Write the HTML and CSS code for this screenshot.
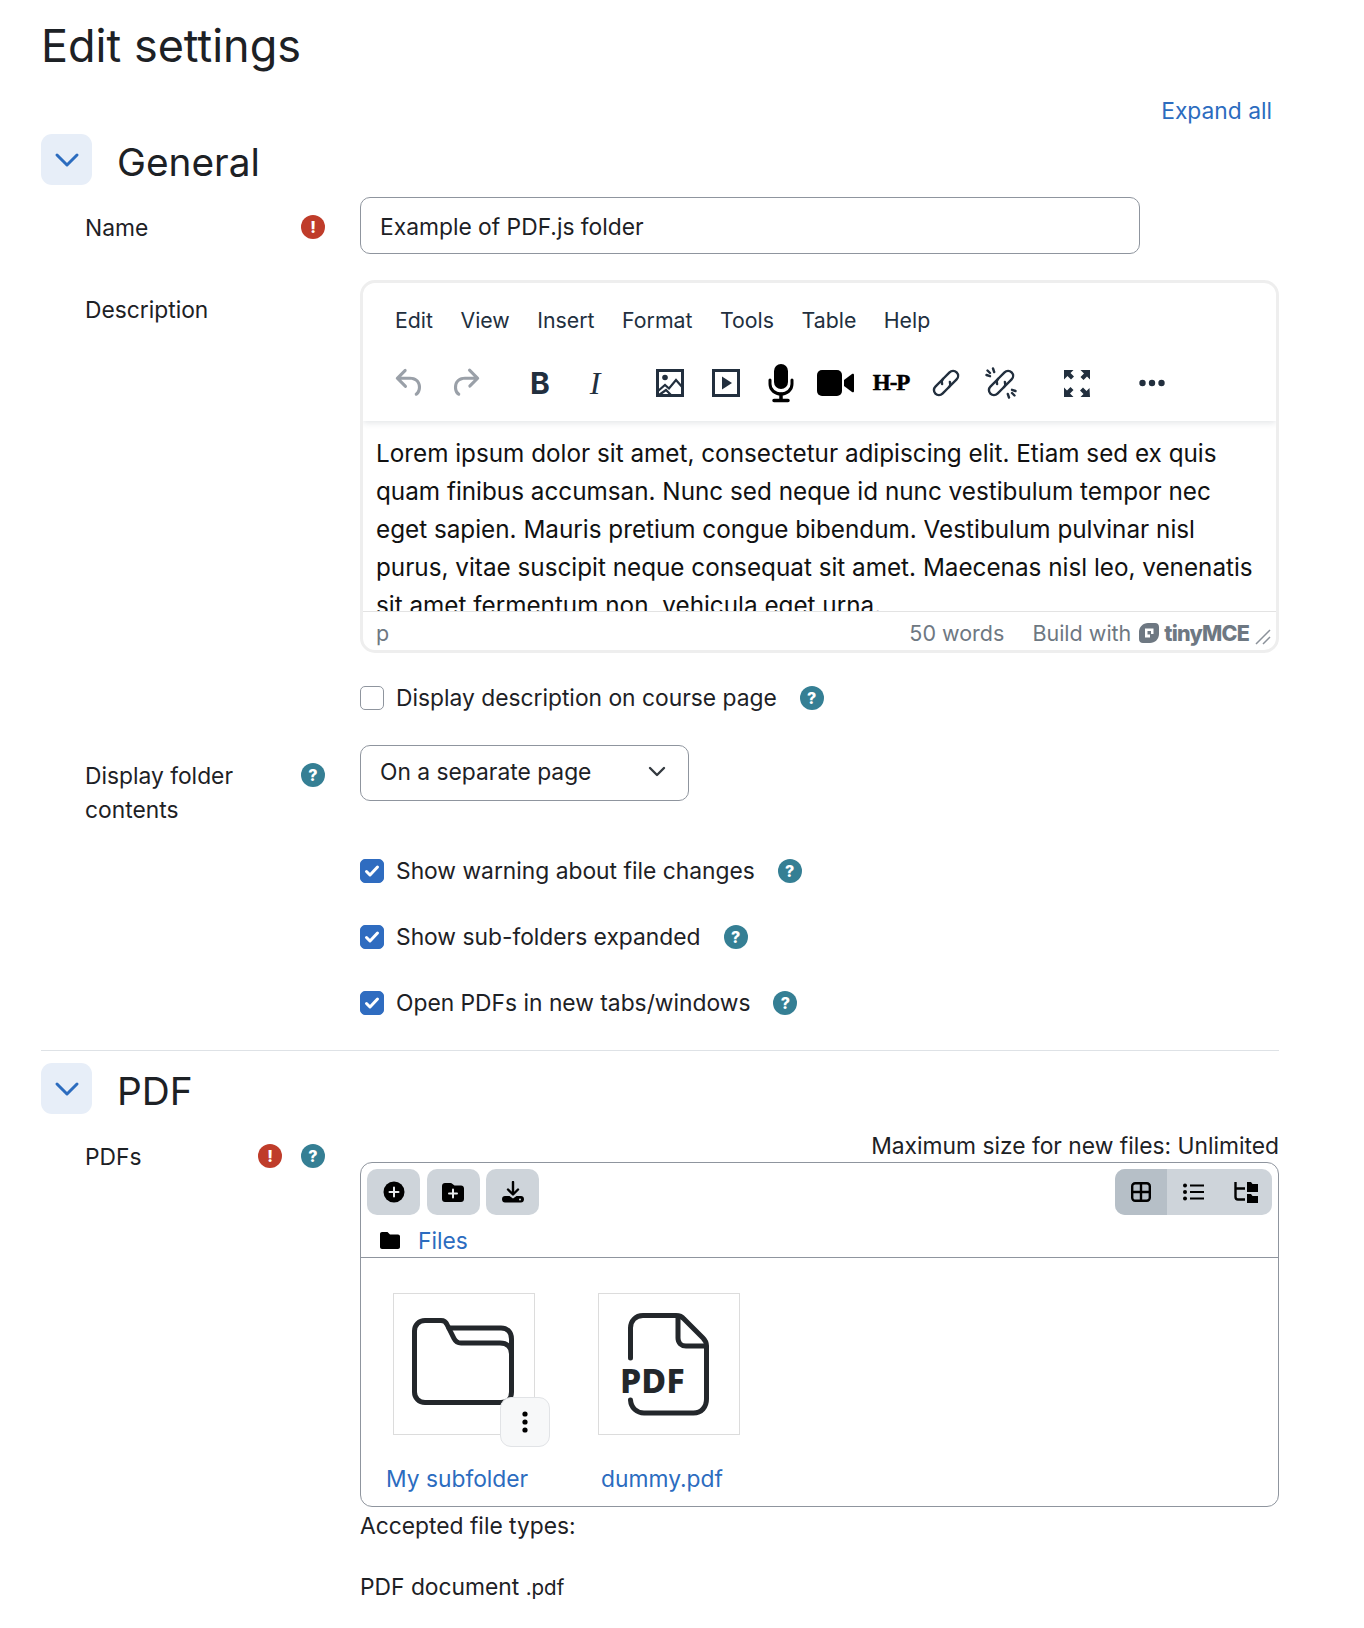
FILE: index.html
```html
<!DOCTYPE html>
<html>
<head>
  <title>Edit settings</title>
  <link rel="stylesheet" href="styles.css">
</head>
<body>
  <h1>Edit settings</h1>
  <div class="expand-row"><a href="#">Expand all</a></div>

  <div class="fold-head">
    <button class="toggle"><svg width="26" height="26" viewBox="0 0 26 26"><path d="M3 8l10 10L23 8" fill="none" stroke="#2c6cbf" stroke-width="3" stroke-linecap="round" stroke-linejoin="round"/></svg></button>
    <h2>General</h2>
  </div>

  <div class="row row-name">
    <div class="label-col">
      <span class="label-text">Name</span>
      <span class="badge badge-error">!</span>
    </div>
    <div class="field-col">
      <input class="text-input" type="text" value="Example of PDF.js folder">
    </div>
  </div>

  <div class="row row-desc">
    <div class="label-col">
      <span class="label-text">Description</span>
    </div>
    <div class="field-col">
      <div class="editor">
        <div class="editor-head">
          <div class="menubar">
            <span>Edit</span><span>View</span><span>Insert</span><span>Format</span><span>Tools</span><span>Table</span><span>Help</span>
          </div>
          <div class="toolbar">
            <div class="tool-group">
              <span class="tool"><svg width="38" height="38" viewBox="0 0 24 24"><path fill="#9aa0a8" d="M6.4 8H12c3.7 0 6.2 2 6.8 5.1.6 2.7-.4 5.6-2.3 6.8a1 1 0 0 1-1-1.8c1.1-.7 1.8-2.7 1.4-4.6-.5-2.1-2.1-3.5-4.9-3.500H6.4l3.300 3.300a1 1 0 1 1-1.400 1.400l-5-5a1 1 0 0 1 0-1.400l5-5a1 1 0 0 1 1.400 1.400L6.400 8Z"/></svg></span>
              <span class="tool"><svg width="38" height="38" viewBox="0 0 24 24"><path fill="#9aa0a8" d="M17.6 10H12c-2.800 0-4.400 1.400-4.900 3.500-.4 2 .3 3.900 1.400 4.600a1 1 0 1 1-1 1.800c-2-1.200-2.900-4.100-2.300-6.800.6-3 3-5.100 6.800-5.100h5.600l-3.300-3.300a1 1 0 1 1 1.400-1.400l5 5a1 1 0 0 1 0 1.400l-5 5a1 1 0 0 1-1.400-1.400l3.300-3.300Z"/></svg></span>
            </div>
            <div class="tool-group">
              <span class="tool tool-b">B</span>
              <span class="tool tool-i">I</span>
            </div>
            <div class="tool-group">
              <span class="tool"><svg width="32" height="32" viewBox="0 0 32 32"><rect x="3.500" y="3.500" width="25" height="25" fill="none" stroke="#222f3e" stroke-width="3"/><circle cx="11" cy="10.500" r="2.800" fill="#222f3e"/><path d="M4 24l7-6 4 3.500L22 13l7 8M5 28l7-5 5 5" fill="none" stroke="#222f3e" stroke-width="2.200"/></svg></span>
              <span class="tool"><svg width="32" height="32" viewBox="0 0 32 32"><rect x="3.500" y="3.500" width="25" height="25" fill="none" stroke="#222f3e" stroke-width="3"/><path d="M12 9.500l10 6.500-10 6.500z" fill="#222f3e"/></svg></span>
              <span class="tool"><svg width="30" height="40" viewBox="0 0 30 40"><rect x="8" y="1" width="14" height="25" rx="7" fill="#000"/><path d="M4 17v4c0 6 5 10 11 10s11-4 11-10v-4" fill="none" stroke="#000" stroke-width="3" stroke-linecap="round"/><path d="M15 31v5M8 37.500h14" fill="none" stroke="#000" stroke-width="3.500" stroke-linecap="round"/></svg></span>
              <span class="tool"><svg width="38" height="28" viewBox="0 0 38 28"><rect x="0" y="1" width="25" height="26" rx="5" fill="#000"/><path d="M27 11l8-6c1-.7 2-.2 2 1v16c0 1.200-1 1.700-2 1l-8-6z" fill="#000"/></svg></span>
              <span class="tool tool-h5p">H-P</span>
              <span class="tool"><svg width="32" height="32" viewBox="0 0 32 32"><g transform="rotate(-45 16 16)" fill="none" stroke="#222f3e" stroke-width="2.400" stroke-linecap="round"><path d="M17 11H6a5 5 0 0 0 0 10h9a5 5 0 0 0 4.500-3"/><path d="M15 21h11a5 5 0 0 0 0-10h-9a5 5 0 0 0-4.500 3"/></g></svg></span>
              <span class="tool"><svg width="32" height="32" viewBox="0 0 32 32"><g fill="none" stroke="#222f3e" stroke-width="2.400" stroke-linecap="round"><g transform="rotate(-45 16 16)"><path d="M17 11H6a5 5 0 0 0 0 10h9a5 5 0 0 0 4.500-3"/><path d="M15 21h11a5 5 0 0 0 0-10h-9a5 5 0 0 0-4.500 3"/></g><path d="M8 1.500l1.200 3.500M1.500 8l3.500 1.200M2.500 3.500L5 6M24 30.500l-1.200-3.500M30.500 24L27 22.800M29.500 28.500L27 26"/></g></svg></span>
            </div>
            <div class="tool-group">
              <span class="tool"><svg width="26" height="27" viewBox="0 0 26 27"><g fill="#222f3e"><path d="M0 0h9.500L6.500 3l3.500 3.500-3 3L3.500 6 0 9.500zM26 0v9.500L23 6.500 19.500 10l-3-3L20 3.500 16.500 0zM0 27v-9.500l3 3 3.500-3.500 3 3L6 23.500 9.500 27zM26 27h-9.500l3-3-3.500-3.500 3-3 3.500 3.500 3-3z"/></g></svg></span>
            </div>
            <div class="tool-group">
              <span class="tool"><svg width="26" height="8" viewBox="0 0 26 8"><g fill="#222f3e"><circle cx="3.500" cy="4" r="3.200"/><circle cx="13" cy="4" r="3.200"/><circle cx="22.500" cy="4" r="3.200"/></g></svg></span>
            </div>
          </div>
        </div>
        <div class="editor-body">Lorem ipsum dolor sit amet, consectetur adipiscing elit. Etiam sed ex quis quam finibus accumsan. Nunc sed neque id nunc vestibulum tempor nec eget sapien. Mauris pretium congue bibendum. Vestibulum pulvinar nisl purus, vitae suscipit neque consequat sit amet. Maecenas nisl leo, venenatis sit amet fermentum non, vehicula eget urna.</div>
        <div class="statusbar">
          <span class="path">p</span>
          <span class="words">50 words</span>
          <span class="brand">Build with
            <svg class="brand-logo" width="22" height="22" viewBox="0 0 22 22"><path fill-rule="evenodd" fill="#6e7882" d="M10 1h7c2.500 0 4 1.500 4 4v7c0 5-4 9-9 9H5c-2.500 0-4-1.500-4-4v-7C1 5 5 1 10 1zM7 6.500v9h5v-3.500h3.500V6.500z"/><rect x="9.500" y="9" width="3.500" height="3.500" fill="#6e7882"/></svg>
            <b>tinyMCE</b>
          </span>
          <svg class="grip" width="16" height="16" viewBox="0 0 16 16"><path d="M1 15L15 1M8 15l7-7" stroke="#8b929a" stroke-width="1.500" fill="none"/></svg>
        </div>
      </div>
    </div>
  </div>

  <div class="row row-check row-first-check">
    <div class="label-col"></div>
    <div class="field-col check-line">
      <span class="checkbox"></span>
      <span>Display description on course page</span>
      <span class="badge badge-help">?</span>
    </div>
  </div>

  <div class="row row-select">
    <div class="label-col">
      <span class="label-text">Display folder<br>contents</span>
      <span class="badge badge-help">?</span>
    </div>
    <div class="field-col">
      <div class="select-box">
        <span>On a separate page</span>
        <svg width="18" height="12" viewBox="0 0 18 12"><path d="M2 2l7 7 7-7" fill="none" stroke="#343a40" stroke-width="2.400" stroke-linecap="round" stroke-linejoin="round"/></svg>
      </div>
    </div>
  </div>

  <div class="row row-check">
    <div class="label-col"></div>
    <div class="field-col check-line">
      <span class="checkbox is-checked"><svg width="16" height="14" viewBox="0 0 16 14"><path d="M2.500 7.500l3.500 3.500 7.500-8" fill="none" stroke="#fff" stroke-width="3" stroke-linecap="round" stroke-linejoin="round"/></svg></span>
      <span>Show warning about file changes</span>
      <span class="badge badge-help">?</span>
    </div>
  </div>
  <div class="row row-check">
    <div class="label-col"></div>
    <div class="field-col check-line">
      <span class="checkbox is-checked"><svg width="16" height="14" viewBox="0 0 16 14"><path d="M2.500 7.500l3.500 3.500 7.500-8" fill="none" stroke="#fff" stroke-width="3" stroke-linecap="round" stroke-linejoin="round"/></svg></span>
      <span>Show sub-folders expanded</span>
      <span class="badge badge-help">?</span>
    </div>
  </div>
  <div class="row row-check">
    <div class="label-col"></div>
    <div class="field-col check-line">
      <span class="checkbox is-checked"><svg width="16" height="14" viewBox="0 0 16 14"><path d="M2.500 7.500l3.500 3.500 7.500-8" fill="none" stroke="#fff" stroke-width="3" stroke-linecap="round" stroke-linejoin="round"/></svg></span>
      <span>Open PDFs in new tabs/windows</span>
      <span class="badge badge-help">?</span>
    </div>
  </div>

  <hr class="divider">

  <div class="fold-head fold-pdf">
    <button class="toggle"><svg width="26" height="26" viewBox="0 0 26 26"><path d="M3 8l10 10L23 8" fill="none" stroke="#2c6cbf" stroke-width="3" stroke-linecap="round" stroke-linejoin="round"/></svg></button>
    <h2>PDF</h2>
  </div>

  <div class="row row-pdfs">
    <div class="label-col">
      <span class="label-text">PDFs</span>
      <span class="badge badge-error">!</span>
      <span class="badge badge-help">?</span>
    </div>
    <div class="field-col">
      <div class="max-size">Maximum size for new files: Unlimited</div>
      <div class="filemanager">
        <div class="fm-top">
          <div class="fm-actions">
            <span class="fm-btn"><svg width="22" height="22" viewBox="0 0 22 22"><circle cx="11" cy="11" r="10.500" fill="#000"/><path d="M11 6.500v9M6.500 11h9" stroke="#e6e9ec" stroke-width="2" stroke-linecap="round"/></svg></span>
            <span class="fm-btn"><svg width="22" height="20" viewBox="0 0 22 20"><path d="M3 1h5.500c.8 0 1.400.3 2 .9L12.500 3.500H19c1.700 0 3 1.300 3 3V17c0 1.700-1.300 3-3 3H3c-1.700 0-3-1.300-3-3V4c0-1.700 1.300-3 3-3z" fill="#000"/><path d="M11 7.500v8M7 11.500h8" stroke="#e6e9ec" stroke-width="2" stroke-linecap="round"/></svg></span>
            <span class="fm-btn"><svg width="22" height="22" viewBox="0 0 22 22"><path d="M11 1v12M6 8.500l5 5 5-5" fill="none" stroke="#000" stroke-width="2.400" stroke-linecap="round" stroke-linejoin="round"/><path d="M3 15h4.500l3.500 2.500 3.500-2.500H19c1.700 0 3 1.100 3 3.300 0 2-1.300 3.300-3 3.300H3c-1.700 0-3-1.300-3-3.300C0 16.100 1.300 15 3 15z" fill="#000"/><circle cx="18" cy="18.500" r="1" fill="#ced4da"/></svg></span>
          </div>
          <div class="fm-views">
            <span class="fm-view is-active"><svg width="20" height="20" viewBox="0 0 20 20"><rect x="1.200" y="1.200" width="17.600" height="17.600" rx="3" fill="none" stroke="#000" stroke-width="2.400"/><path d="M10 1v18M1 10h18" stroke="#000" stroke-width="2.400"/></svg></span>
            <span class="fm-view"><svg width="21" height="18" viewBox="0 0 21 18"><g fill="#000"><circle cx="2" cy="2.500" r="2"/><circle cx="2" cy="9" r="2"/><circle cx="2" cy="15.500" r="2"/></g><path d="M7 2.500h14M7 9h14M7 15.500h14" stroke="#000" stroke-width="2"/></svg></span>
            <span class="fm-view"><svg width="24" height="21" viewBox="0 0 24 21"><path d="M1.500 0v15c0 1.500.8 2.500 2.500 2.500h7M1.500 6.500H11" fill="none" stroke="#000" stroke-width="2.400"/><path d="M13 0h4l1.500 2H24v8H13zM13 12h4l1.500 2H24v7H13z" fill="#000"/></svg></span>
          </div>
        </div>
        <div class="fm-path">
          <svg width="20" height="17" viewBox="0 0 20 17"><path d="M2 0h5.500l2.500 2.500h8c1.100 0 2 .9 2 2V15c0 1.100-.9 2-2 2H2c-1.100 0-2-.9-2-2V2C0 .9.900 0 2 0z" fill="#000"/></svg>
          <a href="#">Files</a>
        </div>
        <div class="fm-content">
          <div class="fm-item">
            <div class="fm-thumb">
              <svg width="142" height="142" viewBox="0 0 142 142"><g fill="none" stroke="#23272b" stroke-width="5" stroke-linejoin="round" stroke-linecap="round"><path d="M32 27.500H48c3 0 5 1.500 6 4l7 14c1.500 3 3.500 4.500 7 4.500h39c7 0 11.500 4 11.500 11V99c0 6-4 10.500-10.500 10.500H32c-6 0-10.500-4.500-10.500-10.500V38c0-6 4.500-10.500 10.500-10.500Z"/><path d="M56 35h52c6 0 10.500 4 10.500 11v16"/></g></svg>
              <span class="fm-kebab"><svg width="6" height="22" viewBox="0 0 6 22"><g fill="#000"><circle cx="3" cy="3" r="2.600"/><circle cx="3" cy="11" r="2.600"/><circle cx="3" cy="19" r="2.600"/></g></svg></span>
            </div>
            <a class="fm-name" href="#">My subfolder</a>
          </div>
          <div class="fm-item">
            <div class="fm-thumb">
              <svg width="142" height="142" viewBox="0 0 142 142"><g fill="none" stroke="#23272b" stroke-width="5" stroke-linejoin="round" stroke-linecap="round"><path d="M32.500 65V35c0-7 5-12.500 12.500-12.500H78c3 0 6 1 8 3.500l19 19c3 3 3.500 5.500 3.500 8V106c0 8-5 14-13 14H46c-7 0-13-5-13.500-13"/><path d="M80 24v21c0 5 3.500 8 8 8h20"/></g><text class="pdf-mark" x="22" y="100">PDF</text></svg>
            </div>
            <a class="fm-name" href="#">dummy.pdf</a>
          </div>
        </div>
      </div>
      <div class="accepted">Accepted file types:</div>
      <div class="accepted-type">PDF document <small>.pdf</small></div>
    </div>
  </div>
</body>
</html>
```

FILE: styles.css
```css
body {
  font-family: Inter, "Liberation Sans", sans-serif;
  font-size: 22.8px;
  line-height: 34px;
  color: #1d2125;
  background: #fff;
  margin: 0;
  padding: 0 85px 0 41px;
  height: 1628px;
  overflow: hidden;
  box-sizing: border-box;
}

a {
  color: #2c6cbf;
  text-decoration: none;
}

h1 {
  font-size: 45px;
  font-weight: 400;
  line-height: 54px;
  margin: 0;
  padding-top: 19px;
}

h2 {
  font-size: 38.8px;
  font-weight: 400;
  line-height: 51px;
  margin: 0;
  padding-top: 3px;
}

.expand-row {
  display: flex;
  justify-content: flex-end;
  padding-right: 7px;
  margin-top: 21px;
  height: 40px;
}

.fold-head {
  display: flex;
  align-items: center;
  gap: 25px;
  height: 51px;
  margin-bottom: 12px;
}

.toggle {
  width: 51px;
  height: 51px;
  border: none;
  border-radius: 11px;
  background: #e7eef8;
  padding: 0;
  display: flex;
  align-items: center;
  justify-content: center;
}

.row {
  display: flex;
}

.label-col {
  width: 319px;
  flex: none;
  box-sizing: border-box;
  padding: 14px 35px 0 44px;
  display: flex;
  align-items: flex-start;
  gap: 19px;
}

.label-text {
  margin-right: auto;
}

.field-col {
  width: 919px;
  flex: none;
}

.badge {
  width: 24px;
  height: 24px;
  flex: none;
  border-radius: 50%;
  color: #fff;
  font-size: 16px;
  font-weight: 800;
  line-height: 24px;
  text-align: center;
  margin-top: 4px;
}

.badge-error {
  background: #bf3c2a;
}

.badge-help {
  background: #357f94;
}

.text-input {
  width: 780px;
  height: 57px;
  box-sizing: border-box;
  border: 1px solid #8f959e;
  border-radius: 10px;
  padding: 2px 19px 0;
  font: inherit;
  color: inherit;
  display: block;
}

.row-name {
  margin-bottom: 26px;
}

.row-desc .label-col {
  padding-top: 13px;
}

.editor {
  height: 373px;
  box-sizing: border-box;
  border: 3px solid #eeeeee;
  border-radius: 15px;
  overflow: hidden;
  display: flex;
  flex-direction: column;
}

.editor-head {
  height: 138px;
  flex: none;
  box-shadow: 0 2px 6px rgba(34, 47, 62, 0.12);
  position: relative;
}

.menubar {
  display: flex;
  gap: 27.5px;
  padding: 20px 0 0 32px;
  height: 34px;
  color: #222f3e;
  font-size: 21.3px;
}

.toolbar {
  display: flex;
  gap: 20px;
  padding: 23px 0 0 19px;
}

.tool-group {
  display: flex;
}

.tool {
  width: 55.2px;
  height: 46px;
  display: flex;
  align-items: center;
  justify-content: center;
  color: #222f3e;
}

.tool-b {
  font-size: 30px;
  font-weight: 700;
}

.tool-i {
  font-family: "Liberation Serif", serif;
  font-style: italic;
  font-size: 32px;
}

.tool-h5p {
  font-family: "Liberation Serif", serif;
  font-weight: 700;
  font-size: 23px;
  color: #000;
  letter-spacing: -1px;
  -webkit-text-stroke: 0.5px #000;
}

.editor-body {
  flex: 1;
  min-height: 0;
  overflow: hidden;
  font-size: 24.28px;
  line-height: 38px;
  color: #111;
  padding: 13px 13px 0;
}

.statusbar {
  height: 39px;
  flex: none;
  box-sizing: border-box;
  border-top: 1px solid #e3e3e3;
  display: flex;
  align-items: center;
  color: #6e7882;
  font-size: 21.5px;
  padding: 3px 5px 0 13px;
}

.path {
  margin-right: auto;
}

.words {
  margin-right: 28px;
}

.brand {
  display: flex;
  align-items: center;
  gap: 7px;
}

.brand-logo {
  margin-right: -3px;
}

.brand b {
  font-weight: 800;
  letter-spacing: -0.8px;
}

.grip {
  margin: 8px 0 0 6px;
}

.row-check {
  margin-top: 30px;
}

.row-first-check {
  margin-top: 27px;
}

.check-line {
  display: flex;
  align-items: center;
  height: 36px;
}

.checkbox {
  width: 24px;
  height: 24px;
  box-sizing: border-box;
  border: 1px solid #8f959e;
  border-radius: 5px;
  margin-right: 12px;
  display: flex;
  align-items: center;
  justify-content: center;
}

.checkbox.is-checked {
  background: #2f6cc0;
  border-color: #2f6cc0;
}

.check-line .badge {
  margin: 0 0 0 23px;
}

.row-select {
  margin-top: 29px;
  height: 108px;
}

.row-select + .row-check {
  margin-top: 0;
}

.select-box {
  width: 329px;
  height: 56px;
  box-sizing: border-box;
  border: 1px solid #8f959e;
  border-radius: 10px;
  padding: 0 22px 2px 19px;
  display: flex;
  align-items: center;
  justify-content: space-between;
}

.divider {
  border: none;
  border-top: 1px solid #dee2e6;
  margin: 29px 0 12px;
}

.row-pdfs .label-col {
  padding-top: 9px;
}

.fold-pdf {
  margin-bottom: 17px;
}

.max-size {
  text-align: right;
  height: 31px;
  line-height: 30px;
}

.filemanager {
  height: 345px;
  box-sizing: border-box;
  border: 1px solid #8f959e;
  border-radius: 12px;
  display: flex;
  flex-direction: column;
}

.fm-top {
  display: flex;
  justify-content: space-between;
  padding: 6px 6px 0;
}

.fm-actions {
  display: flex;
  gap: 6.5px;
}

.fm-btn {
  width: 53px;
  height: 46px;
  border-radius: 10px;
  background: #ced4da;
  display: flex;
  align-items: center;
  justify-content: center;
}

.fm-views {
  display: flex;
  border-radius: 10px;
  overflow: hidden;
  background: #ced4da;
}

.fm-view {
  width: 52.4px;
  height: 46px;
  display: flex;
  align-items: center;
  justify-content: center;
}

.fm-view.is-active {
  background: #b6bfc7;
}

.fm-path {
  height: 43px;
  box-sizing: border-box;
  border-bottom: 1px solid #8f959e;
  display: flex;
  align-items: center;
  gap: 18px;
  padding: 11px 0 1px 19px;
}

.fm-path svg {
  margin-top: -2px;
}

.fm-content {
  display: flex;
  gap: 63px;
  padding: 35px 0 0 32px;
}

.fm-item {
  width: 142px;
}

.fm-thumb {
  width: 142px;
  height: 142px;
  box-sizing: border-box;
  border: 1px solid #dcdcdc;
  position: relative;
}

.fm-thumb svg {
  display: block;
  margin: -1px;
}

.fm-kebab {
  position: absolute;
  left: 106px;
  top: 103px;
  width: 50px;
  height: 50px;
  box-sizing: border-box;
  background: #f7f8f9;
  border: 1px solid #e1e3e6;
  border-radius: 11px;
  display: flex;
  align-items: center;
  justify-content: center;
}

.fm-kebab svg {
  margin: 0;
}

.pdf-mark {
  font-family: "Noto Sans", sans-serif;
  font-weight: 800;
  font-size: 34px;
  fill: #23272b;
  stroke: none;
}

.fm-name {
  display: block;
  margin: 27px 7px 0 -7px;
  white-space: nowrap;
  text-align: center;
}

.accepted {
  margin-top: 2px;
  height: 61px;
}

.accepted-type small {
  font-size: 20.5px;
}
```
